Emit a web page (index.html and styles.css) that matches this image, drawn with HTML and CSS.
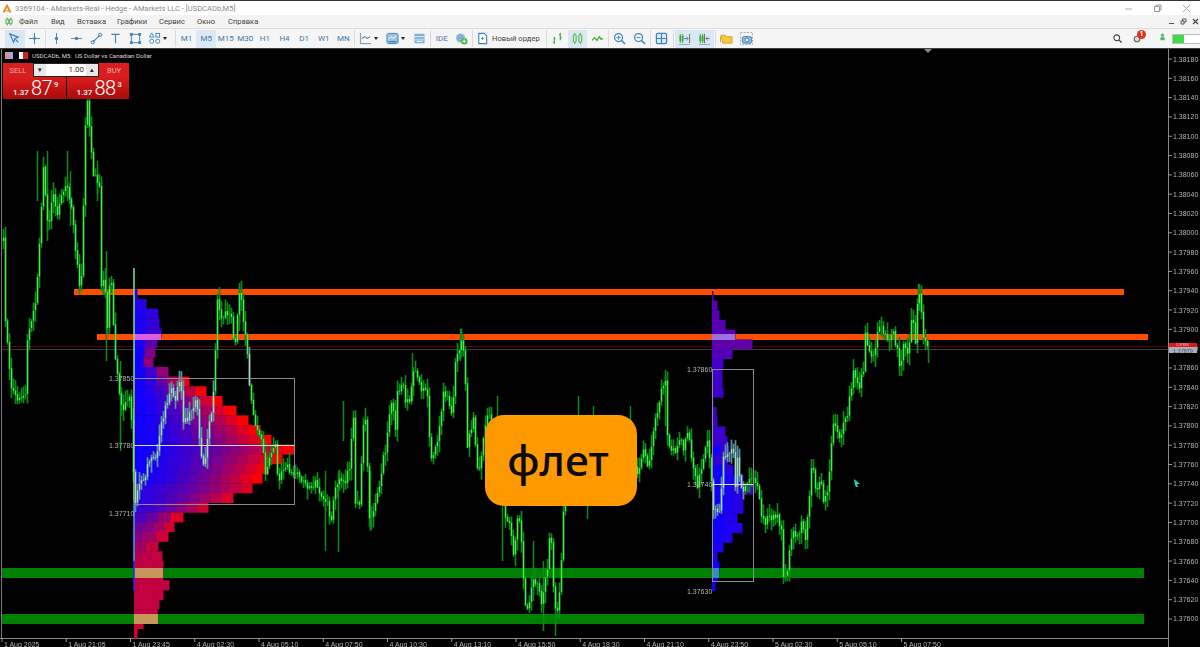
FILE: index.html
```html
<!DOCTYPE html>
<html lang="ru">
<head>
  <meta charset="UTF-8">
  <title>3369104 - AMarkets-Real - Hedge - AMarkets LLC - [USDCADb,M5]</title>
  <link rel="stylesheet" href="styles.css">
</head>
<body>
  <!-- Window title -->
  <div class="titlebar">
    <svg class="app-logo" viewBox="0 0 11 11"><path d="M5.5 .5 10.5 10.5H8L5.5 5 3 10.5H.5Z" fill="#f08a1c"/><path d="M3 8h5v1.2H3z" fill="#f08a1c"/></svg>
    <span class="title-text">3369104 - AMarkets-Real - Hedge - AMarkets LLC - [USDCADb,M5]</span>
    <div class="win-btns">
      <svg viewBox="0 0 9 9"><path d="M1 5h7" stroke="#aaa"/></svg>
      <svg viewBox="0 0 9 9"><path d="M1.5 2.5h5v5h-5zM3 2.5V1h5v5H6.500" fill="none" stroke="#999"/></svg>
      <svg viewBox="0 0 9 9"><path d="M1 1l7 7M8 1 1 8" stroke="#aaa"/></svg>
    </div>
  </div>

  <!-- Menu -->
  <div class="menubar">
    <svg class="menu-logo" viewBox="0 0 9 9"><path d="M2.500 0v9M6.500 0v9" stroke="#3f9d3f"/><path d="M1 2h3v5H1zM5 2h3v5H5z" fill="#cdeccd" stroke="#3f9d3f" stroke-width=".8"/></svg>
    <nav class="menu">
      <a class="m1">Файл</a>
      <a class="m2">Вид</a>
      <a class="m3">Вставка</a>
      <a class="m4">Графики</a>
      <a class="m5">Сервис</a>
      <a class="m6">Окно</a>
      <a class="m7">Справка</a>
    </nav>
    <div class="mini-btns">
      <svg viewBox="0 0 7 7"><path d="M1 5.500h5" stroke="#555"/></svg>
      <svg viewBox="0 0 7 7"><path d="M1 3h3v3H1zM2.500 3V1h3.500v3H4" fill="none" stroke="#555"/></svg>
      <svg viewBox="0 0 7 7"><path d="M1 1l5 5M6 1 1 6" stroke="#444" stroke-width="1.200"/></svg>
    </div>
  </div>

  <!-- Toolbar -->
  <div class="toolbar">
    <div class="tb active"><svg viewBox="0 0 14 14"><path d="M2 2l9 3.500-3.500 1.500L6 11z" fill="none" stroke="#3f83b8" stroke-width="1.300"/><path d="M8 8l3 3" stroke="#3f83b8" stroke-width="1.300"/></svg></div>
    <div class="tb"><svg viewBox="0 0 14 14"><path d="M7 1v12M1 7h12" stroke="#3f83b8"/><circle cx="7" cy="7" r="1.500" fill="#3f83b8"/></svg></div>
    <i class="sep"></i>
    <div class="tb"><svg viewBox="0 0 14 14"><path d="M7 1v12" stroke="#3f83b8"/><circle cx="7" cy="7" r="1.800" fill="#3f83b8"/></svg></div>
    <div class="tb"><svg viewBox="0 0 14 14"><path d="M1 7h12" stroke="#3f83b8"/><circle cx="7" cy="7" r="1.800" fill="#3f83b8"/></svg></div>
    <div class="tb"><svg viewBox="0 0 14 14"><path d="M3 11l8-8" stroke="#3f83b8" stroke-width="1.200"/><circle cx="3" cy="11" r="1.800" fill="none" stroke="#3f83b8"/><circle cx="11" cy="3" r="1.800" fill="none" stroke="#3f83b8"/></svg></div>
    <div class="tb"><svg viewBox="0 0 14 14"><path d="M2.500 2.500h9M7 2.500V12" stroke="#3f83b8" stroke-width="1.200" fill="none"/></svg></div>
    <div class="tb"><svg viewBox="0 0 14 14"><rect x="2.500" y="2.500" width="9" height="9" fill="none" stroke="#3f83b8"/><path d="M1 1h3v3H1zM10 1h3v3h-3zM1 10h3v3H1zM10 10h3v3h-3z" fill="#3f83b8"/></svg></div>
    <div class="tb wide first"><svg viewBox="0 0 14 14"><path d="M4 1 6.500 5.500h-5z" fill="none" stroke="#3f83b8"/><rect x="8.500" y="1.500" width="4" height="4" fill="none" stroke="#3f83b8"/><circle cx="4" cy="10" r="2.200" fill="none" stroke="#3f83b8"/><circle cx="10.500" cy="10" r="2.200" fill="none" stroke="#3f83b8"/></svg><b class="caret"></b></div>
    <i class="sep"></i>
    <div class="tb tf">M1</div>
    <div class="tb tf active">M5</div>
    <div class="tb tf">M15</div>
    <div class="tb tf">M30</div>
    <div class="tb tf">H1</div>
    <div class="tb tf">H4</div>
    <div class="tb tf">D1</div>
    <div class="tb tf">W1</div>
    <div class="tb tf">MN</div>
    <i class="sep"></i>
    <div class="tb wide"><svg viewBox="0 0 14 14"><path d="M1.500 1v11.500H13" fill="none" stroke="#888"/><path d="M3 7l3-2 3 2 3-2" fill="none" stroke="#3f83b8" stroke-width="1.100"/></svg><b class="caret"></b></div>
    <div class="tb wide"><svg viewBox="0 0 14 14"><rect x="1" y="1.500" width="12" height="11" rx="2" fill="#9cc4e0" stroke="#3f83b8"/><path d="M2.500 8l3-3 2 2 4-3" fill="none" stroke="#fff"/><path d="M3 10.500h8" stroke="#3f83b8" stroke-width="1.500"/></svg><b class="caret"></b></div>
    <div class="tb"><svg viewBox="0 0 14 14"><rect x="1.500" y="2" width="11" height="10" rx="1" fill="#7fb2d8"/><path d="M1.500 5h11M1.500 8.500h11" stroke="#fff" stroke-width=".8"/><path d="M4 10.200h6" stroke="#fff"/></svg></div>
    <i class="sep"></i>
    <div class="tb ide">IDE</div>
    <div class="tb"><svg viewBox="0 0 14 14"><circle cx="6" cy="6.500" r="5.200" fill="#a9c7de"/><circle cx="6" cy="6.500" r="3" fill="none" stroke="#5c8fb5"/><circle cx="6" cy="6.500" r="1.200" fill="#5c8fb5"/><circle cx="10" cy="10" r="3.500" fill="#4cb84c"/><path d="M10 8v4M8 10h4" stroke="#fff"/></svg></div>
    <i class="sep"></i>
    <div class="tb order">
      <svg viewBox="0 0 14 14"><path d="M3 1.500h6l2.500 2.500v8.500H3z" fill="#fff" stroke="#3f83b8" stroke-width="1.200"/><path d="M7 5.500v3M5.500 7h3" stroke="#3f83b8"/></svg>
      <span>Новый ордер</span>
    </div>
    <i class="sep"></i>
    <div class="tb"><svg viewBox="0 0 14 14"><path d="M3.500 5v8M2 11h1.500M3.500 7H5M10 1v8M8.500 3H10M10 6h1.500" stroke="#3cab3c" stroke-width="1.200" fill="none"/></svg></div>
    <div class="tb active"><svg viewBox="0 0 14 14"><path d="M4 1v12M10 1v12" stroke="#3cab3c"/><rect x="2.500" y="3" width="3" height="8" rx=".8" fill="#d6efd6" stroke="#3cab3c"/><rect x="8.500" y="3" width="3" height="8" rx=".8" fill="#d6efd6" stroke="#3cab3c"/></svg></div>
    <div class="tb"><svg viewBox="0 0 14 14"><path d="M1 9l3-3 2.500 3L9 5l2 3 2-1" fill="none" stroke="#3cab3c" stroke-width="1.300"/></svg></div>
    <i class="sep"></i>
    <div class="tb"><svg viewBox="0 0 14 14"><circle cx="6" cy="6" r="4.300" fill="none" stroke="#3f83b8" stroke-width="1.300"/><path d="M9.200 9.200 13 13" stroke="#3f83b8" stroke-width="1.600"/><path d="M6 3.800v4.400M3.800 6h4.400" stroke="#3f83b8"/></svg></div>
    <div class="tb"><svg viewBox="0 0 14 14"><circle cx="6" cy="6" r="4.300" fill="none" stroke="#3f83b8" stroke-width="1.300"/><path d="M9.200 9.200 13 13" stroke="#3f83b8" stroke-width="1.600"/><path d="M3.800 6h4.400" stroke="#3f83b8"/></svg></div>
    <i class="sep"></i>
    <div class="tb"><svg viewBox="0 0 14 14"><rect x="1.500" y="1.500" width="11" height="11" rx="1.500" fill="#dcebf6" stroke="#3f83b8" stroke-width="1.300"/><path d="M7 1.500v11M1.500 7h11" stroke="#3f83b8" stroke-width="1.300"/></svg></div>
    <i class="sep"></i>
    <div class="tb active"><svg viewBox="0 0 14 14"><path d="M2.500 2v10M5 2v10" stroke="#3cab3c"/><rect x="1.500" y="4" width="2" height="6" fill="#3cab3c"/><rect x="4" y="4" width="2" height="6" fill="#3cab3c"/><path d="M6.500 7h4M9 5l2 2-2 2" fill="none" stroke="#3f83b8"/><path d="M12.500 2v10" stroke="#666"/><path d="M1 13.500h12" stroke="#8ab"/></svg></div>
    <div class="tb active"><svg viewBox="0 0 14 14"><path d="M2.500 2v10M5 2v10" stroke="#3cab3c"/><rect x="1.500" y="4" width="2" height="6" fill="#3cab3c"/><rect x="4" y="4" width="2" height="6" fill="#3cab3c"/><path d="M7 2v10" stroke="#666"/><path d="M12.500 7h-4M10.500 5l-2 2 2 2" fill="none" stroke="#3f83b8"/><path d="M1 13.500h12" stroke="#8ab"/></svg></div>
    <i class="sep"></i>
    <div class="tb"><svg viewBox="0 0 14 14"><path d="M1 3.500h5l1 1.500h6v7H3z" fill="#f6c93c" stroke="#c99a1e" stroke-width=".8"/><path d="M.5 5v6" stroke="#c99a1e"/></svg></div>
    <div class="tb"><svg viewBox="0 0 14 14"><rect x=".5" y=".5" width="13" height="13" fill="none" stroke="#8ab" stroke-dasharray="2 1.500"/><rect x="2.500" y="5" width="10" height="7" rx="1.500" fill="#8dbbdc" stroke="#3f83b8"/><circle cx="7.500" cy="8.500" r="2" fill="#fff" stroke="#3f83b8"/></svg></div>

    <div class="tb-right">
      <svg class="ic-search" viewBox="0 0 10 10"><circle cx="4.200" cy="4.200" r="3.200" fill="none" stroke="#444" stroke-width="1.200"/><path d="M6.600 6.600 9.500 9.500" stroke="#444" stroke-width="1.500"/></svg>
      <div class="bell">
        <svg viewBox="0 0 10 10"><circle cx="5" cy="5" r="3.500" fill="#ddd" stroke="#666" stroke-width="1.400"/></svg>
        <span class="badge">1</span>
      </div>
      <svg class="ic-user" viewBox="0 0 10 12"><circle cx="5" cy="2.300" r="1.800" fill="#55b96a"/><path d="M2.500 8V6a2.500 2 0 0 1 5 0v2z" fill="#55b96a"/></svg>
      <div class="signal"><span class="signal-fill"></span></div>
    </div>
  </div>

  <!-- Chart -->
  <main class="chart">
    <svg id="plot" class="plot" viewBox="0 48 1200 599"></svg>

    <div class="chart-name">
      <i class="flag"></i><i class="flag dark"></i>
      <span>USDCADb, M5:&nbsp; US Dollar vs Canadian Dollar</span>
    </div>

    <div class="trade">
      <div class="trade-top">
        <div class="side">SELL</div>
        <div class="lot">
          <span class="lot-btn">&#9662;</span>
          <span class="lot-val">1.00</span>
          <span class="lot-btn">&#9652;</span>
        </div>
        <div class="side">BUY</div>
      </div>
      <div class="trade-bottom">
        <div class="price"><small>1.37</small><strong>87</strong><sup>9</sup></div>
        <div class="price"><small>1.37</small><strong>88</strong><sup>3</sup></div>
      </div>
    </div>

    <div class="flat-label">флет</div>
  </main>

  <script src="chart.js"></script>
</body>
</html>
```
FILE: styles.css
```css
* {
  box-sizing: border-box;
}

body {
  margin: 0;
  height: 100vh;
  overflow: hidden;
  display: flex;
  flex-direction: column;
  font-family: Roboto, "Noto Sans", sans-serif;
  background: #000;
}

svg {
  display: block;
}

/* Title bar */
.titlebar {
  height: 15px;
  flex: none;
  display: flex;
  align-items: center;
  background: #fff;
  border-top: 1px solid #333;
  padding-left: 2px;
}

.app-logo {
  width: 10px;
  height: 10px;
}

.title-text {
  margin-left: 3px;
  font-size: 7.55px;
  color: #8a8a8a;
  white-space: nowrap;
}

.win-btns {
  margin-left: auto;
  display: flex;
  gap: 20px;
  padding-right: 9px;
}

.win-btns svg {
  width: 9px;
  height: 9px;
}

/* Menu */
.menubar {
  height: 13px;
  flex: none;
  display: flex;
  align-items: center;
  background: #f3f3f3;
  padding-left: 5px;
}

.menu-logo {
  width: 8px;
  height: 9px;
}

.menu {
  display: flex;
  margin-left: 6px;
  font-size: 7.6px;
  color: #444;
}

.m1 { width: 32px; }
.m2 { width: 26px; }
.m3 { width: 40px; }
.m4 { width: 42px; }
.m5 { width: 38px; }
.m6 { width: 31px; }

.mini-btns {
  margin-left: auto;
  display: flex;
  gap: 5px;
  padding-right: 1px;
}

.mini-btns svg {
  width: 7px;
  height: 7px;
}

/* Toolbar */
.toolbar {
  height: 20px;
  flex: none;
  display: flex;
  align-items: center;
  background: #f5f5f5;
  border-top: 1px solid #dcdcdc;
  padding-left: 5px;
}

.tb {
  width: 19.6px;
  height: 18px;
  flex: none;
  display: flex;
  align-items: center;
  justify-content: center;
}

.tb svg {
  width: 13px;
  height: 13px;
}

.tb.active {
  background: #dbe8f3;
}

.tb.wide {
  width: 26.6px;
  justify-content: flex-start;
  padding-left: 3px;
  gap: 2px;
}

.tb.wide.first {
  width: 28.6px;
}

.caret {
  width: 0;
  height: 0;
  border: 2.5px solid transparent;
  border-top: 3px solid #222;
  border-bottom: 0;
}

.tf {
  font-size: 8px;
  color: #3f78a8;
}

.ide {
  font-size: 8px;
  font-weight: 500;
  color: #6f93b3;
}

.tb.order {
  width: 71px;
  justify-content: flex-start;
  gap: 3px;
  padding-left: 2px;
  font-size: 7.6px;
  color: #444;
  white-space: nowrap;
}

.sep {
  width: 1px;
  height: 17px;
  flex: none;
  margin: 0 1px;
  background: #dadada;
}

.tb-right {
  margin-left: auto;
  display: flex;
  align-items: center;
}

.ic-search {
  width: 9px;
  height: 9px;
}

.bell {
  position: relative;
  width: 8px;
  height: 8px;
  margin-left: 11px;
}

.badge {
  position: absolute;
  top: -5px;
  left: 4px;
  width: 9px;
  height: 9px;
  border-radius: 50%;
  background: #e0301e;
  color: #fff;
  font-size: 7px;
  font-weight: 700;
  line-height: 9px;
  text-align: center;
}

.ic-user {
  width: 9px;
  height: 11px;
  margin-left: 17px;
}

.signal {
  width: 28px;
  height: 10px;
  margin-left: 5px;
  background: #fff;
  border: 1px solid #bbb;
  border-right: 0;
}

.signal-fill {
  display: block;
  width: 11px;
  height: 100%;
  background: #3fdc4a;
}

/* Chart */
.chart {
  position: relative;
  flex: 1;
  background: #000;
  border-top: 1px solid #444;
  overflow: hidden;
}

.plot {
  position: absolute;
  left: 0;
  top: 0;
  width: 1200px;
  height: 599px;
  filter: blur(0.4px);
}

.plot text {
  font-family: "Liberation Sans", Arial, sans-serif;
  font-size: 7px;
  fill: #b4b4b4;
}

.plot text.ask {
  font-size: 3.5px;
  fill: #ffc0c0;
}

.plot text.bid {
  font-size: 5.5px;
  fill: #4a5468;
}

.chart-name {
  position: absolute;
  left: 5px;
  top: 3px;
  display: flex;
  align-items: center;
  gap: 3px;
  font-size: 6.1px;
  color: #d8d8d8;
  white-space: nowrap;
}

.flag {
  width: 8px;
  height: 7px;
  background: linear-gradient(90deg, #e88a8a 50%, #8ab0e0 50%);
}

.flag.dark {
  width: 9px;
  margin-left: 3px;
  background: linear-gradient(90deg, #fff 40%, #c22 40%);
}

.chart-name span {
  margin-left: 1px;
}

/* One click trading */
.trade {
  position: absolute;
  left: 3px;
  top: 14px;
  width: 126px;
  color: #fff;
}

.trade-top {
  display: flex;
  height: 14px;
}

.side {
  width: 30px;
  display: flex;
  align-items: center;
  justify-content: center;
  background: #d81e1e;
  font-size: 7.5px;
  color: #f4a8a8;
}

.lot {
  flex: 1;
  display: flex;
  border: 1px solid #222;
  background: #fff;
  color: #333;
  font-size: 8px;
  line-height: 12px;
}

.lot-btn {
  width: 12px;
  background: #e8e8e8;
  text-align: center;
  font-size: 7px;
  color: #222;
}

.lot-val {
  flex: 1;
  text-align: right;
  padding-right: 2px;
}

.trade-bottom {
  display: flex;
  gap: 1px;
  height: 22px;
}

.price {
  flex: 1;
  display: flex;
  align-items: baseline;
  padding-left: 10px;
  background: linear-gradient(#dc1c1c, #a80c0c);
  line-height: 23px;
}

.price small {
  font-size: 8px;
  font-weight: 500;
  margin-right: 2px;
}

.price strong {
  font-size: 20px;
  font-weight: 300;
  letter-spacing: -0.5px;
}

.price sup {
  font-size: 7.5px;
  font-weight: 500;
  margin-left: 2px;
  line-height: 0;
  position: relative;
  top: -8px;
  vertical-align: baseline;
}

/* Text added on top of the chart */
.flat-label {
  position: absolute;
  left: 485px;
  top: 366px;
  width: 152px;
  height: 91px;
  display: flex;
  align-items: center;
  justify-content: center;
  padding-right: 6px;
  border-radius: 19px;
  background: #ff9900;
  color: #0a0a0a;
  font-family: "Noto Sans", sans-serif;
  font-size: 42.5px;
  font-weight: 500;
  line-height: 1;
}
```
FILE: chart.js
```js
const plot = document.getElementById('plot');
const SVG_NS = 'http://www.w3.org/2000/svg';

function el(name, attrs, text) {
  const node = document.createElementNS(SVG_NS, name);
  Object.keys(attrs).forEach((key) => node.setAttribute(key, attrs[key]));
  if (text) node.textContent = text;
  plot.appendChild(node);
  return node;
}

function rect(x, y, w, h, fill) {
  return el('rect', { x, y, width: w, height: h, fill });
}

function line(x1, y1, x2, y2, stroke, width) {
  return el('line', { x1, y1, x2, y2, stroke, 'stroke-width': width || 1 });
}

function label(x, y, text) {
  return el('text', { x, y }, text);
}

// fixed seed so every render gives the same bars
let seed = 4711;
function rnd() {
  seed = (seed * 16807) % 2147483647;
  return seed / 2147483647;
}

function mix(a, b, t) {
  return a.map((v, i) => Math.round(v + (b[i] - v) * t));
}

function css(c) {
  return `rgb(${c[0]},${c[1]},${c[2]})`;
}

/* Frame and axes */
line(1.5, 48, 1.5, 637, '#777');
line(0, 637.5, 1168, 637.5, '#888');
line(1168.5, 48, 1168.5, 647, '#888');
el('polygon', { points: '924,48 932,48 928,52', fill: '#888' });

for (let i = 0; i <= 29; i++) {
  const y = 58 + i * 19.31;
  const price = (1.3818 - i * 0.0002).toFixed(5);
  line(1168, y, 1172, y, '#999');
  label(1173, y + 2.5, price);
}

const times = ['1 Aug 2025', '1 Aug 21:05', '1 Aug 23:45', '4 Aug 02:30', '4 Aug 05:10', '4 Aug 07:50',
  '4 Aug 10:30', '4 Aug 13:10', '4 Aug 15:50', '4 Aug 18:30', '4 Aug 21:10', '4 Aug 23:50',
  '5 Aug 02:30', '5 Aug 05:10', '5 Aug 07:50'];
times.forEach((text, i) => {
  const x = 2 + i * 64.25;
  line(x, 637, x, 641, '#999');
  label(x + 2, 646, text);
});

/* Level lines under the profiles */
rect(2, 567, 1142, 10, '#008000');
rect(2, 613, 1142, 10, '#008000');
rect(74, 288, 1050, 6, '#ff4c00');
rect(97, 333, 1051, 6, '#ff4c00');
line(2, 345.5, 1168, 345.5, '#600000');
line(2, 348.5, 1168, 348.5, '#3a3a3a');

/* Volume profiles: [row top, right edge, colour at left, colour at right], 0 blue .. 1 red */
const BLUE = [16, 0, 255];
const RED = [255, 0, 0];

function drawProfile(left, rows, rowH) {
  rows.forEach((row) => {
    const [top, right, from, to] = row;
    const steps = Math.max(1, Math.round((right - left) / 11));
    const w = (right - left) / steps;
    for (let s = 0; s < steps; s++) {
      const pos = steps === 1 ? 1 : s / (steps - 1);
      const t = from + (to - from) * Math.pow(pos, 1.5);
      rect(left + s * w, top, w + 0.5, rowH, css(mix(BLUE, RED, t)));
    }
  });
}

const rowsA = [
  [137, 0.1, 0.1], [146, 0.08, 0.1], [158, 0.05, 0.12], [159, 0.05, 0.14], [161, 0.05, 0.2], [157, 0.05, 0.3],
  [155, 0, 0.45], [153, 0, 0.55], [168, 0, 0.55], [189, 0, 0.95], [206, 0, 0.98], [222, 0, 1], [236, 0, 1],
  [248, 0, 1], [260, 0, 1], [271, 0, 1], [294, 0, 1], [282, 0, 1], [268, 0, 0.95], [262, 0, 1], [252, 0.1, 0.85],
  [233, 0.1, 0.85], [208, 0.15, 0.8], [183, 0.25, 0.85], [174, 0.4, 0.8], [168, 0.5, 0.8], [158, 0.6, 0.75],
  [162, 0.7, 0.75], [163, 0.75, 0.75], [163, 0.75, 0.75], [169, 0.75, 0.75], [163, 0.75, 0.75], [159, 0.75, 0.75],
  [157, 0.75, 0.75], [143, 0.75, 0.8], [137, 0.75, 0.8],
].map((r, i) => [288.3 + i * 9.7, r[0], r[1], r[2]]);
drawProfile(134, rowsA, 10);
rect(134, 333, 27, 6, '#d860e0');
rect(134, 567, 29, 10, '#c8965a');
rect(134, 613, 24, 10, '#c8965a');

const rowsB = [
  [713, 0.3, 0.3], [717, 0.3, 0.3], [719, 0.3, 0.3], [725, 0.3, 0.3], [735, 0.3, 0.3], [752, 0.33, 0.33],
  [732, 0.28, 0.28], [723, 0.2, 0.2], [722, 0.2, 0.2], [722, 0.2, 0.2], [723, 0.2, 0.2], [713, 0.2, 0.2],
  [716, 0.2, 0.2], [717, 0.2, 0.2], [725, 0.2, 0.2], [727, 0, 0.18], [729, 0, 0.15], [728, 0, 0.15], [733, 0, 0.1],
  [743, 0, 0.1], [753, 0, 0.22], [743, 0, 0.1], [743, 0, 0.1], [737, 0, 0.08], [742, 0, 0.08], [732, 0, 0.08],
  [723, 0, 0.05], [717, 0, 0.05], [719, 0, 0], [717, 0, 0], [715, 0, 0],
].map((r, i) => [290 + i * 9.67, r[0], r[1], r[2]]);
drawProfile(712, rowsB, 10);
rect(712, 333, 23, 6, '#a070e0');
rect(712, 567, 7, 10, '#3a8ac8');

/* Price path read off the chart, [x, y] */
const path = [3, 240, 4, 307, 7, 340, 10, 383, 17, 400, 25, 392, 27, 340, 32, 315, 35, 300, 38, 262, 43, 163, 48, 230,
  52, 193, 57, 213, 62, 190, 68, 187, 72, 217, 76, 257, 79, 283, 82, 273, 84, 133, 87, 100, 90, 133, 92, 173, 97, 178,
  100, 190, 101, 287, 104, 280, 107, 323, 110, 267, 112, 303, 115, 357, 118, 383, 122, 410, 130, 393, 133, 470,
  135, 500, 140, 480, 145, 473, 150, 453, 155, 460, 160, 427, 165, 407, 170, 387, 175, 395, 180, 380, 183, 420,
  187, 417, 195, 400, 198, 417, 200, 457, 205, 460, 208, 427, 212, 407, 215, 350, 217, 300, 222, 320, 226, 310,
  232, 320, 234, 350, 238, 300, 240, 285, 243, 320, 246, 345, 249, 380, 252, 410, 257, 430, 262, 440, 265, 470,
  270, 450, 275, 445, 278, 480, 285, 465, 292, 470, 300, 475, 310, 490, 316, 480, 320, 495, 325, 500, 328, 503,
  330, 530, 333, 500, 336, 480, 340, 478, 345, 480, 350, 460, 352, 413, 354, 420, 355, 500, 360, 505, 362, 420,
  366, 420, 367, 465, 369, 520, 372, 510, 376, 500, 379, 485, 383, 455, 386, 450, 388, 420, 392, 400, 395, 430,
  396, 395, 399, 390, 402, 375, 405, 400, 408, 400, 410, 405, 412, 370, 416, 370, 420, 385, 427, 392, 430, 463,
  437, 443, 443, 393, 450, 403, 452, 417, 455, 363, 462, 337, 465, 380, 467, 443, 473, 420, 477, 467, 480, 463,
  483, 433, 488, 405, 495, 440, 503, 500, 505, 515, 510, 525, 513, 555, 518, 510, 522, 555, 524, 605, 528, 612,
  532, 575, 537, 585, 541, 600, 547, 565, 550, 525, 553, 585, 556, 618, 560, 585, 563, 510, 570, 480, 580, 465,
  600, 455, 615, 460, 630, 445, 637, 473, 643, 450, 648, 470, 653, 430, 662, 383, 665, 380, 667, 437, 672, 450,
  677, 447, 680, 430, 683, 447, 688, 427, 692, 467, 697, 483, 702, 460, 707, 440, 710, 467, 712, 487, 713, 510,
  720, 507, 723, 457, 730, 453, 732, 437, 735, 483, 737, 460, 742, 490, 748, 477, 753, 480, 757, 483, 762, 518,
  765, 523, 768, 507, 770, 522, 775, 513, 782, 527, 783, 573, 787, 573, 790, 540, 793, 528, 797, 537, 802, 520,
  805, 537, 808, 503, 812, 460, 815, 487, 820, 480, 823, 497, 828, 487, 830, 450, 833, 420, 840, 443, 843, 423,
  847, 417, 850, 390, 853, 370, 858, 387, 863, 370, 865, 333, 872, 360, 875, 343, 878, 322, 883, 330, 888, 340,
  893, 333, 897, 347, 900, 370, 903, 345, 908, 350, 912, 313, 915, 343, 917, 300, 920, 293, 922, 330, 925, 340, 928, 347];

function priceAt(x) {
  for (let i = 0; i < path.length - 2; i += 2) {
    if (x <= path[i + 2]) {
      return path[i + 1] + ((path[i + 3] - path[i + 1]) * (x - path[i])) / (path[i + 2] - path[i]);
    }
  }
  return path[path.length - 1];
}

// bars that lie inside a profile are blended with it and look washed out
function overProfile(x, y) {
  return (x > 134 && x < 250 && y > 370 && y < 505) || (x > 712 && x < 745 && y > 440 && y < 515);
}

/* Single long wicks that stick out of the path */
const spikes = [[37, 150, 200], [47, 150, 240], [67, 150, 200], [70, 170, 225], [97, 160, 200], [106, 250, 360],
  [120, 360, 450], [239, 282, 330], [343, 400, 440], [325, 470, 550], [338, 470, 551], [370, 470, 530], [412, 352, 400],
  [460, 328, 360], [497, 395, 500], [578, 395, 470], [587, 440, 518], [593, 405, 470], [630, 405, 480], [665, 375, 425],
  [543, 560, 630], [555, 590, 635], [533, 540, 600], [502, 500, 560], [783, 540, 583], [918, 283, 310], [928, 340, 362]];

spikes.forEach((s) => line(s[0] + 0.5, s[1], s[0] + 0.5, s[2], '#0c8a18', 1.5));

const bars = [];
let prev = priceAt(3);
for (let x = 3; x <= 928; x += 2) {
  const y = priceAt(x) + (rnd() - 0.5) * 8;
  bars.push({ x, open: prev, close: y, top: Math.min(prev, y) - 1 - rnd() * 11, bottom: Math.max(prev, y) + 1 + rnd() * 11 });
  prev = y;
}

// wicks first so the bright bodies stay on top of them
bars.forEach((b) => {
  const washed = overProfile(b.x, b.close);
  line(b.x + 0.5, b.top, b.x + 0.5, b.bottom, washed ? '#5f8fa0' : '#0a8a18', 1.7);
});
bars.forEach((b) => {
  const washed = overProfile(b.x, b.close);
  line(b.x + 0.5, b.open, b.x + 0.5, b.close + 0.5, washed ? '#9fdcc0' : '#48ec48', 1.4);
});

/* Profile boxes and labels, over the bars */
line(134, 267, 134, 500, '#7fe0a0', 1.5);
line(134, 500, 134, 560, '#3aa0ff', 1.5);
line(134, 560, 134, 590, '#1030ff', 1.5);

function box(x, y, w, h, midY) {
  el('rect', { x: x + 0.5, y: y + 0.5, width: w, height: h, fill: 'none', stroke: '#8c8c8c' });
  line(x, midY + 0.5, x + w, midY + 0.5, '#dcdcdc');
}

box(134, 377, 160, 126, 444);
box(712, 368, 41, 212, 483);
label(109, 380, '1.37850');
label(109, 446.5, '1.37780');
label(109, 515, '1.37710');
label(687, 370.5, '1.37860');
label(687, 486, '1.37740');
label(687, 592.5, '1.37630');

/* Current bid and ask on the price axis */
rect(1169, 342, 28, 4, '#e01818');
rect(1169, 346, 28, 6, '#a8b0c0');
el('text', { x: 1176, y: 345, class: 'ask' }, '1.37893');
el('text', { x: 1173, y: 351.5, class: 'bid' }, '1.37879');

/* Mouse pointer */
el('polygon', { points: '854,478 860,483 857,483 858,486 856,486 855,484', fill: '#10d8c8' });
```
